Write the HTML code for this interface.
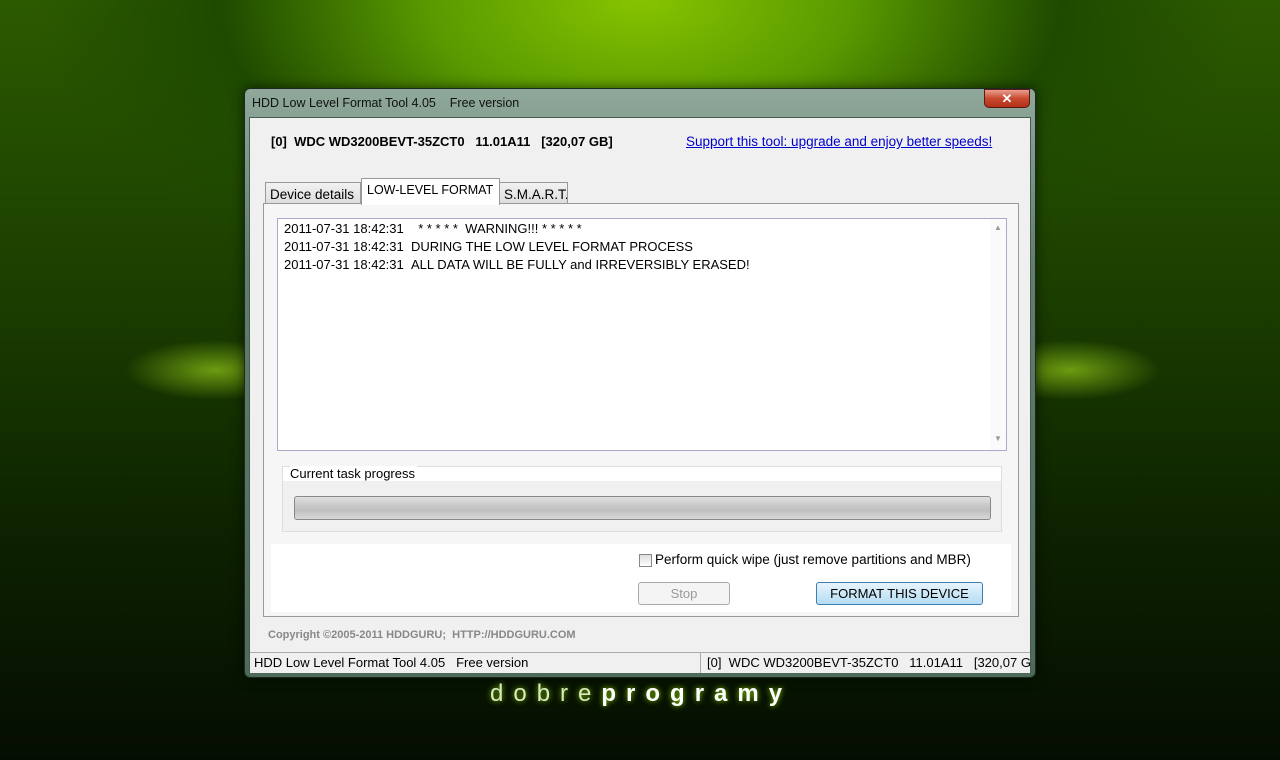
<!DOCTYPE html>
<html><head><meta charset="utf-8"><style>
*{margin:0;padding:0;box-sizing:border-box}
body{width:1280px;height:760px;overflow:hidden;position:relative;font-family:"Liberation Sans",sans-serif;font-size:13px;color:#000;
background:
radial-gradient(ellipse 90px 30px at 215px 370px,rgba(180,240,30,.55),rgba(0,0,0,0) 100%),
radial-gradient(ellipse 90px 30px at 1070px 370px,rgba(180,240,30,.55),rgba(0,0,0,0) 100%),
radial-gradient(ellipse 600px 320px at 640px 0px,#86c400 0%,#5a9a00 35%,#1e4a00 70%,rgba(10,30,0,0) 100%),
linear-gradient(180deg,#2c5a00 0%,#1a3d00 40%,#0d2200 70%,#050d02 100%);}
.win{position:absolute;left:244px;top:88px;width:792px;height:590px;border-radius:6px;border:1px solid #1a2a20;
background:linear-gradient(180deg,#8fa89a 0%,#5f7e6c 30%,#4d6a5a 100%);box-shadow:0 0 12px rgba(0,0,0,.6)}
.title{position:absolute;left:7px;top:7px;font-size:12.5px;color:#111}
.close{position:absolute;left:739px;top:0;width:46px;height:19px;border-radius:0 0 5px 5px;border:1px solid #5a1a10;
background:linear-gradient(180deg,#e8a090 0%,#c84a30 50%,#b03018 100%);color:#fff;font-weight:bold;text-align:center;font-size:13px;line-height:17px}
.client{position:absolute;left:4px;top:28px;width:782px;height:556px;background:#f0f0f0;border:1px solid #4a5a50}
.abs{position:absolute}
.tab{position:absolute;height:24px;border:1px solid #999;border-bottom:none;background:linear-gradient(#f2f2f2,#dcdcdc);padding:4px 4px 0;font-size:13.5px;white-space:nowrap;overflow:hidden}
.panel{position:absolute;left:13px;top:85px;width:756px;height:414px;border:1px solid #999;background:#f6f6f6}
.log{position:absolute;left:13px;top:14px;width:730px;height:233px;background:#fff;border:1px solid #aac;font-size:13px;line-height:18px;padding:1px 6px}
.btn{position:absolute;height:23px;border:1px solid #aaa;border-radius:3px;text-align:center;line-height:21px;font-size:13px}
.status{position:absolute;left:0;top:534px;width:780px;height:21px;border-top:1px solid #aaa;background:#f0f0f0;font-size:13px;line-height:20px}
</style></head><body>
<div class="win">
 <div class="title">HDD Low Level Format Tool 4.05 &nbsp;&nbsp; Free version</div>
 <div class="close">✕</div>
 <div class="client">
  <div class="abs" style="left:21px;top:16px;font-weight:bold;font-size:13px">[0]&nbsp; WDC WD3200BEVT-35ZCT0 &nbsp;&nbsp;11.01A11 &nbsp;&nbsp;[320,07 GB]</div>
  <div class="abs" style="left:436px;top:16px;color:#0000cc;text-decoration:underline;font-size:13.5px">Support this tool: upgrade and enjoy better speeds!</div>
  <div class="tab" style="left:15px;width:96px;top:64px;height:22px">Device details</div>
  <div class="tab" style="left:249px;width:69px;top:64px;height:22px">S.M.A.R.T.</div>
  <div class="panel">
   <div class="log">2011-07-31 18:42:31 &nbsp;&nbsp; * * * * * &nbsp;WARNING!!! * * * * *<br>2011-07-31 18:42:31 &nbsp;DURING THE LOW LEVEL FORMAT PROCESS<br>2011-07-31 18:42:31 &nbsp;ALL DATA WILL BE FULLY and IRREVERSIBLY ERASED!
    <div class="abs" style="right:0;top:0;width:16px;height:231px;background:#fafafa;color:#999;font-size:8px;text-align:center">▲<div style="position:absolute;bottom:2px;width:16px">▼</div></div></div>
   <div class="abs" style="left:18px;top:262px;width:720px;height:66px;border:1px solid #ddd;background:#f0f0f0">
    <div style="height:14px;background:#fff"></div>
    <div class="abs" style="left:7px;top:-1px;font-size:13px;background:#fff;padding-right:2px">Current task progress</div>
    <div class="abs" style="left:11px;top:29px;width:697px;height:24px;border:1px solid #888;border-radius:3px;background:linear-gradient(#e0e0e0,#c8c8c8 40%,#c0c0c0 60%,#d8d8d8)"></div>
   </div>
   <div class="abs" style="left:7px;top:340px;width:740px;height:68px;background:#fff">
    <div class="abs" style="left:368px;top:10px;width:13px;height:13px;border:1px solid #888;background:linear-gradient(#ddd,#fff)"></div>
    <div class="abs" style="left:384px;top:8px;font-size:13.5px">Perform quick wipe (just remove partitions and MBR)</div>
    <div class="btn" style="left:367px;top:38px;width:92px;color:#999;background:#f4f4f4">Stop</div>
    <div class="btn" style="left:545px;top:38px;width:167px;border-color:#3c7fb1;background:linear-gradient(#e8f4fc,#cde8f8 50%,#b6dcf4)">FORMAT THIS DEVICE</div>
   </div>
  </div>
  <div class="tab" style="left:111px;width:139px;top:60px;height:27px;background:#fff;border-color:#999;z-index:2;font-size:12.5px;padding-left:5px">LOW-LEVEL FORMAT</div>
  <div class="abs" style="left:18px;top:511px;color:#888;font-weight:bold;font-size:11px">Copyright ©2005-2011 HDDGURU; &nbsp;HTTP://HDDGURU.COM</div>
  <div class="status"><span style="position:absolute;left:4px">HDD Low Level Format Tool 4.05 &nbsp;&nbsp;Free version</span>
   <span style="position:absolute;left:450px;width:330px;border-left:1px solid #aaa;padding-left:6px;white-space:nowrap;overflow:hidden">[0]&nbsp; WDC WD3200BEVT-35ZCT0 &nbsp;&nbsp;11.01A11 &nbsp;&nbsp;[320,07 GB]</span></div>
 </div>
</div>
<div class="abs" style="left:490px;top:680px;font-size:24px;letter-spacing:10px;color:#d8e8c0;text-shadow:0 0 6px #8c0">dobre<b style="color:#fff">programy</b></div>
</body></html>
